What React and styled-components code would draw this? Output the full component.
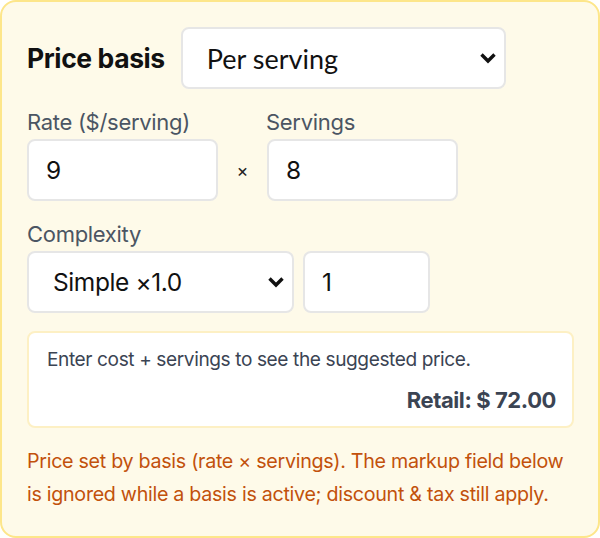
import styled, { createGlobalStyle } from "styled-components";

const Global = createGlobalStyle`
  html, body { margin: 0; padding: 0; }
  body {
    font-family: Inter, "Noto Sans", sans-serif;
    background: #fff;
  }
  * { box-sizing: border-box; }
`;

const Card = styled.div`
  width: 600px;
  height: 538px;
  background: #fefae9;
  border: 2px solid #fde68a;
  border-radius: 16px;
  padding: 25px 24px 20px 25px;
  display: flex;
  flex-direction: column;
`;

const BasisRow = styled.div`
  display: flex;
  align-items: center;
  gap: 16px;
`;

const Title = styled.span`
  font-size: 26.5px;
  font-weight: 700;
  color: #111;
  letter-spacing: -0.4px;
`;

const SelectWrap = styled.div`
  position: relative;
  width: ${(p) => p.$w}px;
`;

const Select = styled.select`
  appearance: none;
  width: 100%;
  height: 62px;
  background: #fff;
  border: 2px solid #e6e6e6;
  border-radius: 8px;
  padding: 0 40px 0 ${(p) => p.$pad || 24}px;
  font-family: ${(p) => (p.$lato ? "Lato, sans-serif" : "Inter, sans-serif")};
  font-size: ${(p) => (p.$lato ? 27 : 24.5)}px;
  letter-spacing: ${(p) => (p.$lato ? 0 : -0.4)}px;
  color: #111;
  outline: none;
`;

const Chevron = styled.svg`
  position: absolute;
  right: ${(p) => p.$r}px;
  top: 50%;
  transform: translateY(-50%);
  pointer-events: none;
`;

const FieldGroup = styled.div`
  margin-top: ${(p) => p.$mt}px;
  display: flex;
  flex-direction: column;
  gap: 4px;
`;

const LabelRow = styled.div`
  display: flex;
`;

const Label = styled.label`
  font-size: 22px;
  line-height: 26px;
  color: #4b5563;
  letter-spacing: -0.3px;
  width: ${(p) => p.$w || "auto"};
`;

const InputRow = styled.div`
  display: flex;
  align-items: center;
  gap: ${(p) => p.$gap || 0}px;
`;

const Input = styled.input`
  width: ${(p) => p.$w}px;
  height: 62px;
  background: #fff;
  border: 2px solid #e6e6e6;
  border-radius: 8px;
  padding: 0 17px;
  font-family: Inter, sans-serif;
  font-size: 24.5px;
  color: #111;
  outline: none;
`;

const Times = styled.span`
  width: 49px;
  text-align: center;
  font-size: 18px;
  color: #222;
`;

const Result = styled.div`
  margin-top: 18px;
  width: 547px;
  background: #fff;
  border: 2px solid #fdf0c4;
  border-radius: 8px;
  padding: 11px 16px 11px 18px;
  display: flex;
  flex-direction: column;
  gap: 11px;
`;

const ResultText = styled.div`
  font-size: ${(p) => (p.$bold ? 22 : 19.1)}px;
  line-height: 30px;
  color: #3b4453;
  letter-spacing: -0.4px;
  text-align: ${(p) => (p.$right ? "right" : "left")};
  font-weight: ${(p) => (p.$bold ? 700 : 400)};
`;

const Note = styled.p`
  margin: 17px 0 0;
  font-size: 19.7px;
  line-height: 33px;
  color: #c2510c;
  letter-spacing: -0.3px;
`;

function Chev({ r }) {
  return (
    <Chevron $r={r} width="18" height="12" viewBox="0 0 18 12">
      <path d="M2.5 2.5 L9 9 L15.5 2.5" fill="none" stroke="#111" strokeWidth="3.4" />
    </Chevron>
  );
}

export default function App() {
  return (
    <>
      <Global />
      <Card>
        <BasisRow>
          <Title>Price basis</Title>
          <SelectWrap $w={325}>
            <Select $lato defaultValue="serving">
              <option value="serving">Per serving</option>
            </Select>
            <Chev r={9} />
          </SelectWrap>
        </BasisRow>

        <FieldGroup $mt={20}>
          <LabelRow>
            <Label $w="239px">Rate ($/serving)</Label>
            <Label>Servings</Label>
          </LabelRow>
          <InputRow>
            <Input $w={191} defaultValue="9" />
            <Times>×</Times>
            <Input $w={191} defaultValue="8" />
          </InputRow>
        </FieldGroup>

        <FieldGroup $mt={20}>
          <LabelRow>
            <Label>Complexity</Label>
          </LabelRow>
          <InputRow $gap={9}>
            <SelectWrap $w={267}>
              <Select $pad={24} defaultValue="1">
                <option value="1">Simple ×1.0</option>
              </Select>
              <Chev r={9} />
            </SelectWrap>
            <Input $w={127} defaultValue="1" />
          </InputRow>
        </FieldGroup>

        <Result>
          <ResultText>Enter cost + servings to see the suggested price.</ResultText>
          <ResultText $right $bold>Retail: $ 72.00</ResultText>
        </Result>

        <Note>
          Price set by basis (rate × servings). The markup field below is ignored while a basis is active; discount &amp; tax still apply.
        </Note>
      </Card>
    </>
  );
}
